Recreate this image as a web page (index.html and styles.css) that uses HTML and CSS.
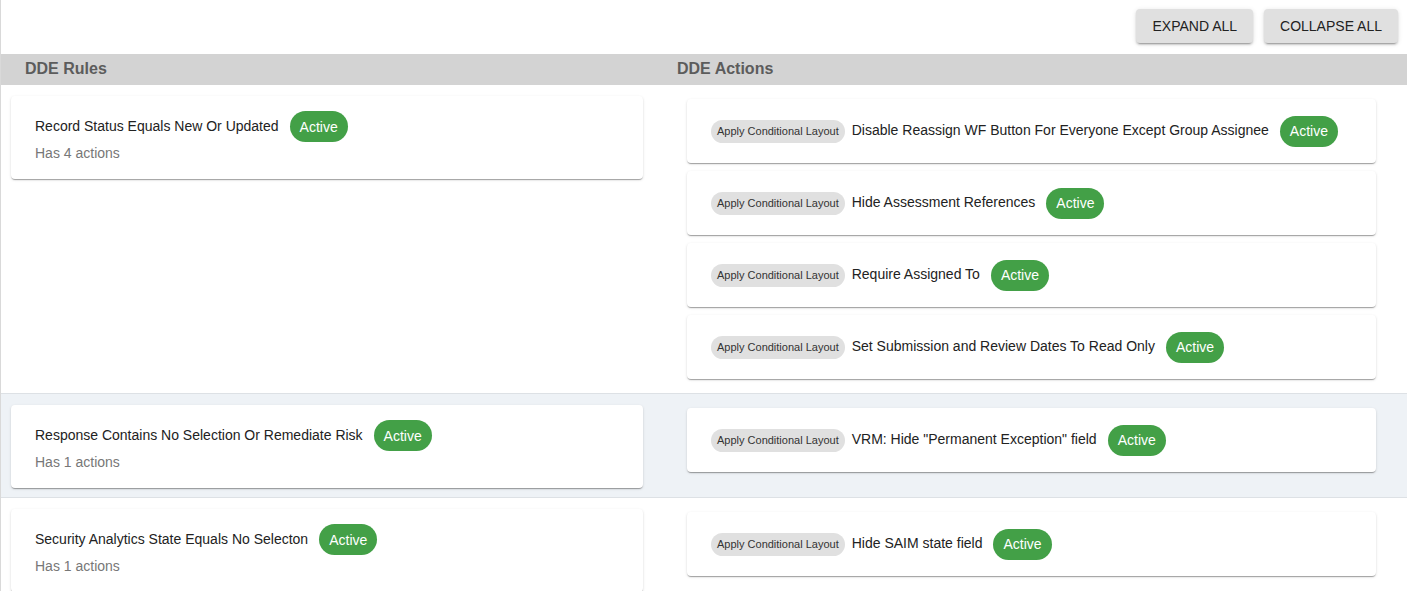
FILE: index.html
```html
<!DOCTYPE html>
<html lang="en">
<head>
<meta charset="utf-8">
<title>DDE Rules</title>
<link rel="stylesheet" href="styles.css">
</head>
<body>
<div class="page">
  <div class="toolbar">
    <button class="btn">Expand All</button>
    <button class="btn">Collapse All</button>
  </div>
  <div class="grid head">
    <div class="head-cell">DDE Rules</div>
    <div class="head-cell">DDE Actions</div>
  </div>

  <div class="grid row">
    <div class="rules">
      <div class="card rule-card">
        <div class="line"><span class="title">Record Status Equals New Or Updated</span><span class="badge">Active</span></div>
        <div class="sub">Has 4 actions</div>
      </div>
    </div>
    <div class="actions">
      <div class="card action-card"><span class="chip">Apply Conditional Layout</span><span class="title">Disable Reassign WF Button For Everyone Except Group Assignee</span><span class="badge">Active</span></div>
      <div class="card action-card"><span class="chip">Apply Conditional Layout</span><span class="title">Hide Assessment References</span><span class="badge">Active</span></div>
      <div class="card action-card"><span class="chip">Apply Conditional Layout</span><span class="title">Require Assigned To</span><span class="badge">Active</span></div>
      <div class="card action-card"><span class="chip">Apply Conditional Layout</span><span class="title">Set Submission and Review Dates To Read Only</span><span class="badge">Active</span></div>
    </div>
  </div>

  <div class="grid row alt">
    <div class="rules">
      <div class="card rule-card">
        <div class="line"><span class="title">Response Contains No Selection Or Remediate Risk</span><span class="badge">Active</span></div>
        <div class="sub">Has 1 actions</div>
      </div>
    </div>
    <div class="actions">
      <div class="card action-card"><span class="chip">Apply Conditional Layout</span><span class="title">VRM: Hide "Permanent Exception" field</span><span class="badge">Active</span></div>
    </div>
  </div>

  <div class="grid row">
    <div class="rules">
      <div class="card rule-card">
        <div class="line"><span class="title">Security Analytics State Equals No Selecton</span><span class="badge">Active</span></div>
        <div class="sub">Has 1 actions</div>
      </div>
    </div>
    <div class="actions">
      <div class="card action-card"><span class="chip">Apply Conditional Layout</span><span class="title">Hide SAIM state field</span><span class="badge">Active</span></div>
    </div>
  </div>
</div>
</body>
</html>
```

FILE: styles.css
```css
html, body {
  margin: 0;
  padding: 0;
  background: #ffffff;
}

body {
  font-family: "Liberation Sans", Arial, sans-serif;
  font-size: 14px;
  color: #222222;
}

.page {
  border-left: 1px solid #d9d9d9;
  min-height: 100vh;
}

.toolbar {
  display: flex;
  justify-content: flex-end;
  gap: 11px;
  padding: 9px 9px 11px;
}

.btn {
  height: 34px;
  padding: 0 16px;
  border: none;
  border-radius: 4px;
  background: #e0e0e0;
  color: #222222;
  font-family: "Liberation Sans", Arial, sans-serif;
  font-size: 14px;
  text-transform: uppercase;
  box-shadow: 0 3px 1px -2px rgba(0,0,0,0.2), 0 2px 2px 0 rgba(0,0,0,0.14), 0 1px 5px 0 rgba(0,0,0,0.12);
  cursor: pointer;
}

.grid {
  display: grid;
  grid-template-columns: 652px 1fr;
}

.head {
  height: 31px;
  background: #d3d3d3;
  align-items: center;
}

.head-cell {
  padding-left: 24px;
  padding-bottom: 2px;
  font-size: 16px;
  font-weight: bold;
  color: #5c5c5c;
}

.row {
  border-bottom: 1px solid #dde1e5;
}

.row.alt {
  background: #eef2f6;
}

.rules {
  padding: 11px 10px 9px;
}

.actions {
  display: flex;
  flex-direction: column;
  gap: 8px;
  padding: 14px 31px 14px 34px;
}

.card {
  background: #ffffff;
  border-radius: 4px;
  box-shadow: 0 2px 1px -1px rgba(0,0,0,0.2), 0 1px 1px 0 rgba(0,0,0,0.14), 0 1px 3px 0 rgba(0,0,0,0.12);
}

.rule-card {
  height: 83px;
  box-sizing: border-box;
  padding: 15px 24px 16px;
}

.line {
  display: flex;
  align-items: center;
  height: 31px;
}

.title {
  font-size: 14px;
  color: #222222;
  margin-top: -2px;
}

.sub {
  margin-top: 1px;
  line-height: 20px;
  color: #777777;
}

.badge {
  display: inline-flex;
  align-items: center;
  height: 31px;
  padding: 0 10px;
  margin-left: 11px;
  border-radius: 16px;
  background: #43a047;
  color: #ffffff;
  font-size: 14px;
}

.action-card {
  display: flex;
  align-items: center;
  height: 64px;
  box-sizing: border-box;
  padding: 0 24px;
}

.chip {
  display: inline-flex;
  align-items: center;
  height: 23px;
  padding: 0 6px;
  margin-right: 7px;
  border-radius: 12px;
  background: #e0e0e0;
  color: #333333;
  font-size: 11px;
}

.action-card .badge {
  margin-left: 11px;
}
```
